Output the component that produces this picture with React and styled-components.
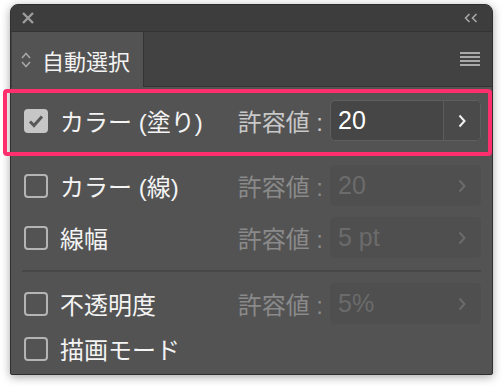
import React from 'react';
import styled, { createGlobalStyle } from 'styled-components';

const GlobalStyle = createGlobalStyle`
  html, body {
    margin: 0;
    background: #ffffff;
  }
  body {
    font-family: "Liberation Sans", "Noto Sans CJK JP", sans-serif;
  }
`;

const Stage = styled.div`
  position: relative;
  width: 504px;
  height: 390px;
  padding: 4px 0 0 10px;
  box-sizing: border-box;
`;

const Panel = styled.div`
  width: 483px;
  height: 371px;
  box-sizing: border-box;
  display: flex;
  flex-direction: column;
  background: #535353;
  border: 1px solid #2f2f2f;
  border-radius: 8px 8px 2px 2px;
  box-shadow: 0 2px 10px rgba(0, 0, 0, 0.35);
  overflow: hidden;
`;

const TitleBar = styled.div`
  height: 26px;
  flex: none;
  display: flex;
  align-items: center;
  justify-content: space-between;
  padding: 0 14px 0 11px;
  background: #3d3d3d;
  border-bottom: 1px solid #333;
`;

const TabStrip = styled.div`
  height: 54px;
  flex: none;
  display: flex;
  align-items: stretch;
  background: #424242;
  border-bottom: 1px solid #343434;
  padding-left: 1px;
`;

const Tab = styled.div`
  width: 132px;
  display: flex;
  align-items: center;
  gap: 10px;
  padding-left: 8px;
  box-sizing: border-box;
  background: #535353;
  color: #f2f2f2;
  font-size: 22px;
  border-right: 1px solid #343434;
  margin-bottom: -1px;
`;

const TabFill = styled.div`
  flex: 1;
  display: flex;
  align-items: center;
  justify-content: flex-end;
  padding-right: 12px;
`;

const Body = styled.div`
  flex: 1;
  display: flex;
  flex-direction: column;
  padding: 13px 11px 0 13px;
`;

const Row = styled.div`
  height: 41px;
  flex: none;
  display: flex;
  align-items: center;
  margin-top: ${(p) => p.$mt || 0}px;
`;

const Box = styled.div`
  width: 24px;
  height: 24px;
  flex: none;
  box-sizing: border-box;
  border-radius: 4px;
  display: flex;
  align-items: center;
  justify-content: center;
  background: ${(p) => (p.$checked ? '#c6c6c6' : 'transparent')};
  border: ${(p) => (p.$checked ? 'none' : '2px solid #b4b4b4')};
`;

const Label = styled.span`
  flex: 1;
  margin-left: 12px;
  color: #f4f4f4;
  font-size: 24px;
  white-space: nowrap;
`;

const Tol = styled.span`
  color: ${(p) => (p.$active ? '#c8c8c8' : '#8a8a8a')};
  font-size: 24px;
  margin-right: 7px;
  white-space: nowrap;
`;

const Field = styled.div`
  width: 151px;
  height: 41px;
  box-sizing: border-box;
  display: flex;
  border-radius: 5px;
  overflow: hidden;
  border: 1px solid ${(p) => (p.$active ? '#5f5f5f' : 'transparent')};
  background: ${(p) => (p.$active ? '#464646' : '#4f4f4f')};
`;

const Value = styled.div`
  flex: 1;
  display: flex;
  align-items: center;
  padding-left: 7px;
  font-size: 25px;
  color: ${(p) => (p.$active ? '#ffffff' : '#6b6b6b')};
`;

const Step = styled.div`
  width: 36px;
  display: flex;
  align-items: center;
  justify-content: center;
  border-left: 1px solid ${(p) => (p.$active ? '#5b5b5b' : 'transparent')};
  background: ${(p) => (p.$active ? '#4a4a4a' : 'transparent')};
`;

const Separator = styled.div`
  height: 2px;
  flex: none;
  margin: 12px 0 11px -2px;
  background: #474747;
`;

const Highlight = styled.div`
  position: absolute;
  left: 3px;
  top: 89px;
  width: 489px;
  height: 67px;
  box-sizing: border-box;
  border: 4px solid #ff2e6d;
  border-radius: 4px;
  pointer-events: none;
`;

const CloseIcon = () => (
  <svg width="12" height="12" viewBox="0 0 12 12">
    <path d="M1 1L11 11M11 1L1 11" stroke="#9c9c9c" strokeWidth="2.4" />
  </svg>
);

const CollapseIcon = () => (
  <svg width="14" height="10" viewBox="0 0 14 10">
    <path d="M5.5 1L1.5 5L5.5 9M12.5 1L8.5 5L12.5 9" stroke="#ababab" strokeWidth="1.5" fill="none" />
  </svg>
);

const UpDownIcon = () => (
  <svg width="12" height="18" viewBox="0 0 12 18">
    <path d="M2 7L6 2.5L10 7M2 11L6 15.5L10 11" stroke="#a6a6a6" strokeWidth="1.6" fill="none" />
  </svg>
);

const MenuIcon = () => (
  <svg width="20" height="14" viewBox="0 0 20 14">
    {[0, 4, 8, 12].map((y) => (
      <rect key={y} x="0" y={y} width="20" height="2" fill="#a9a9a9" />
    ))}
  </svg>
);

const Chevron = ({ color }) => (
  <svg width="10" height="14" viewBox="0 0 10 14">
    <path d="M2.5 1.5L7.5 7L2.5 12.5" stroke={color} strokeWidth="2" fill="none" />
  </svg>
);

const Check = () => (
  <svg width="16" height="14" viewBox="0 0 16 14">
    <path d="M2 7.5L6 11.5L14 2.5" stroke="#585858" strokeWidth="3" fill="none" />
  </svg>
);

const Option = ({ checked, label, value, active, mt }) => (
  <Row $mt={mt}>
    <Box $checked={checked}>{checked && <Check />}</Box>
    <Label>{label}</Label>
    {value !== undefined && (
      <>
        <Tol $active={active}>許容値 :</Tol>
        <Field $active={active}>
          <Value $active={active}>{value}</Value>
          <Step $active={active}>
            <Chevron color={active ? '#f2f2f2' : '#6b6b6b'} />
          </Step>
        </Field>
      </>
    )}
  </Row>
);

export default function App() {
  return (
    <>
      <GlobalStyle />
      <Stage>
        <Panel>
          <TitleBar>
            <CloseIcon />
            <CollapseIcon />
          </TitleBar>
          <TabStrip>
            <Tab>
              <UpDownIcon />
              <span>自動選択</span>
            </Tab>
            <TabFill>
              <MenuIcon />
            </TabFill>
          </TabStrip>
          <Body>
            <Option checked label="カラー (塗り)" value="20" active />
            <Option label="カラー (線)" value="20" mt={24} />
            <Option label="線幅" value="5 pt" mt={11} />
            <Separator />
            <Option label="不透明度" value="5%" />
            <Option label="描画モード" mt={4} />
          </Body>
        </Panel>
        <Highlight />
      </Stage>
    </>
  );
}
